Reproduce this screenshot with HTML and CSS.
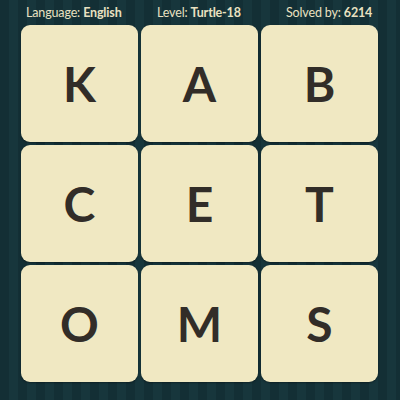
FILE: index.html
```html
<!DOCTYPE html>
<html>
<head>
<meta charset="utf-8">
<link rel="stylesheet" href="styles.css">
</head>
<body>
<div class="page">
  <div class="header">
    <div class="item">Language: <b>English</b></div>
    <div class="item">Level: <b>Turtle-18</b></div>
    <div class="item">Solved by: <b>6214</b></div>
  </div>
  <div class="board">
    <div class="tile">K</div>
    <div class="tile">A</div>
    <div class="tile">B</div>
    <div class="tile">C</div>
    <div class="tile">E</div>
    <div class="tile">T</div>
    <div class="tile">O</div>
    <div class="tile">M</div>
    <div class="tile">S</div>
  </div>
</div>
</body>
</html>
```
FILE: styles.css
```css
html, body {
  margin: 0;
  padding: 0;
}
body {
  width: 400px;
  height: 400px;
  overflow: hidden;
  background-color: #143137;
  background-image: repeating-linear-gradient(90deg, #132f35 0px, #132f35 9px, #17363c 9px, #17363c 18px);
  font-family: Lato, "Open Sans", sans-serif;
}
.page {
  width: 400px;
  height: 400px;
}
.header {
  height: 25px;
  display: grid;
  grid-template-columns: 131px 129px auto;
  padding-left: 26px;
  align-items: center;
  color: #e9e1c1;
  font-size: 12.5px;
  letter-spacing: -0.15px;
  line-height: 22px;
}
.header b {
  font-weight: 700;
}
.board {
  display: grid;
  grid-template-columns: repeat(3, 117px);
  grid-template-rows: repeat(3, 117px);
  gap: 3px;
  padding-left: 21px;
}
.tile {
  background: #f0e8c2;
  border-radius: 9px;
  display: flex;
  align-items: center;
  justify-content: center;
  color: #322d28;
  font-family: Lato, sans-serif;
  font-weight: 700;
  font-size: 48px;
  box-shadow: 0 1px 2px rgba(0,0,0,0.35);
}
```
